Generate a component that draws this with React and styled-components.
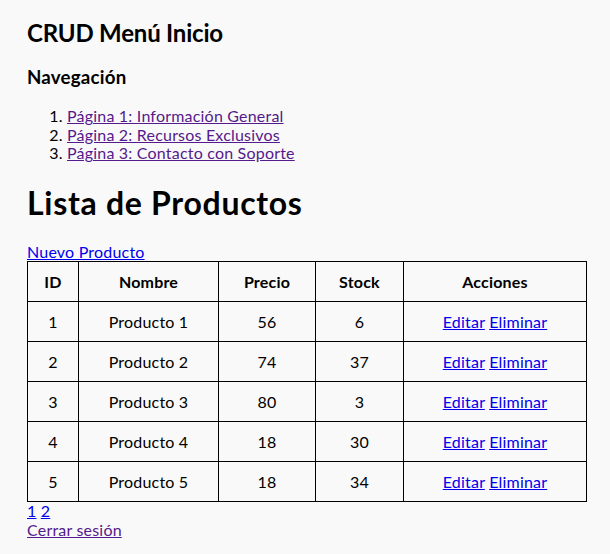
import React from "react";
import styled, { createGlobalStyle } from "styled-components";

const Global = createGlobalStyle`
  html, body { margin: 0; padding: 0; background: #f9f9f9; }
  body { font-family: "Lato", "DejaVu Sans", sans-serif; color: #000; line-height: 1.16; letter-spacing: 0.2px; }
`;

const Page = styled.div`
  padding: 0 27px;
`;

const Title = styled.h2`
  font-size: 24px;
  font-weight: bold;
  letter-spacing: -0.2px;
  margin: 19px 0 20px;
`;

const SubTitle = styled.h3`
  font-size: 18.72px;
  font-weight: bold;
  margin: 0 0 18.72px;
`;

const NavList = styled.ol`
  margin: 0 0 21.44px;
  padding-left: 40px;
  font-size: 16px;
`;

const Link = styled.a`
  color: ${(p) => (p.$visited ? "#551a8b" : "#0000ee")};
  text-decoration: underline;
  cursor: pointer;
`;

const Heading = styled.h1`
  font-size: 32px;
  font-weight: bold;
  letter-spacing: 0.7px;
  margin: 0 0 21.44px;
`;

const Line = styled.div`
  font-size: 16px;
`;

const Table = styled.table`
  border-collapse: collapse;
  table-layout: fixed;
  width: 559px;
  font-size: 16px;
`;

const Col = styled.col`
  width: ${(p) => p.$w};
`;

const Th = styled.th`
  border: 1px solid #000;
  height: 39px;
  padding: 0;
  text-align: center;
  font-weight: bold;
`;

const Td = styled.td`
  border: 1px solid #000;
  height: 39px;
  padding: 0;
  text-align: center;
  white-space: nowrap;
`;

const products = [
  [1, "Producto 1", 56, 6],
  [2, "Producto 2", 74, 37],
  [3, "Producto 3", 80, 3],
  [4, "Producto 4", 18, 30],
  [5, "Producto 5", 18, 34],
];

export default function App() {
  return (
    <>
      <Global />
      <Page>
        <Title>CRUD Menú Inicio</Title>
        <SubTitle>Navegación</SubTitle>
        <NavList>
          <li><Link $visited>Página 1: Información General</Link></li>
          <li><Link $visited>Página 2: Recursos Exclusivos</Link></li>
          <li><Link $visited>Página 3: Contacto con Soporte</Link></li>
        </NavList>
        <Heading>Lista de Productos</Heading>
        <Line><Link>Nuevo Producto</Link></Line>
        <Table>
          <colgroup>
            <Col $w="51px" />
            <Col $w="140px" />
            <Col $w="97px" />
            <Col $w="88px" />
            <Col $w="183px" />
          </colgroup>
          <thead>
            <tr>
              <Th>ID</Th>
              <Th>Nombre</Th>
              <Th>Precio</Th>
              <Th>Stock</Th>
              <Th>Acciones</Th>
            </tr>
          </thead>
          <tbody>
            {products.map(([id, name, price, stock]) => (
              <tr key={id}>
                <Td>{id}</Td>
                <Td>{name}</Td>
                <Td>{price}</Td>
                <Td>{stock}</Td>
                <Td>
                  <Link>Editar</Link> <Link>Eliminar</Link>
                </Td>
              </tr>
            ))}
          </tbody>
        </Table>
        <Line><Link>1</Link> <Link>2</Link></Line>
        <Line><Link $visited>Cerrar sesión</Link></Line>
      </Page>
    </>
  );
}
